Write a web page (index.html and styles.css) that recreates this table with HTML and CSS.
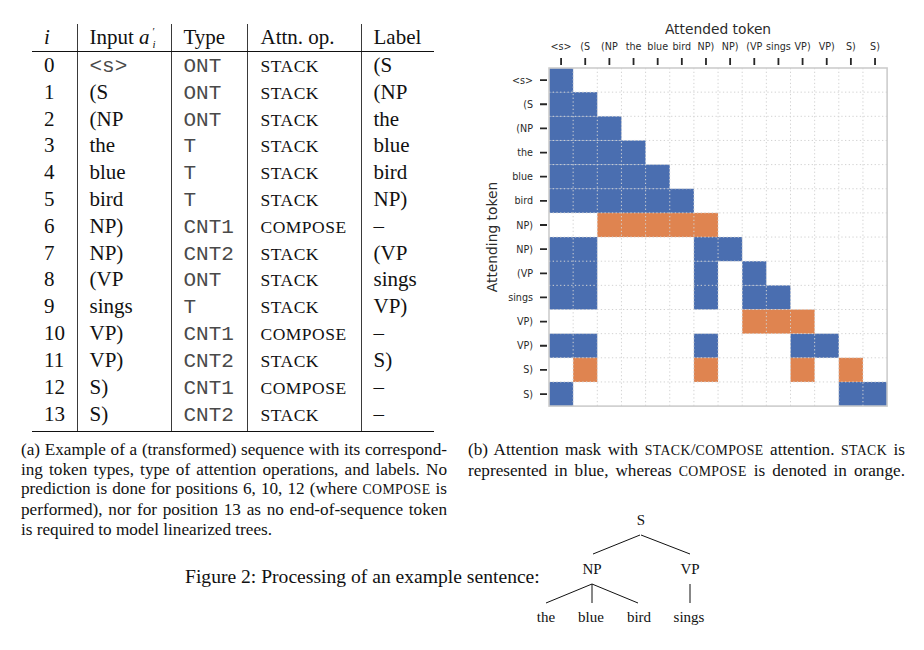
FILE: index.html
```html
<!DOCTYPE html>
<html lang="en">
<head>
<meta charset="utf-8">
<title>Figure 2</title>
<link rel="stylesheet" href="styles.css">
</head>
<body>
<div class="top">
  <div class="tbl-wrap">
    <table class="seq">
      <colgroup><col class="w-i"><col class="w-in"><col class="w-ty"><col class="w-op"><col class="w-lb"></colgroup>
      <thead>
        <tr><th><i>i</i></th><th>Input <span class="math"><i>a</i><span class="ps"><span class="pr">′</span><i class="sb">i</i></span></span></th><th>Type</th><th class="op">Attn. op.</th><th>Label</th></tr>
      </thead>
      <tbody>
        <tr><td>0</td><td><span class="mono">&lt;s&gt;</span></td><td><span class="mono">ONT</span></td><td class="op"><span class="sc">STACK</span></td><td>(S</td></tr>
        <tr><td>1</td><td>(S</td><td><span class="mono">ONT</span></td><td class="op"><span class="sc">STACK</span></td><td>(NP</td></tr>
        <tr><td>2</td><td>(NP</td><td><span class="mono">ONT</span></td><td class="op"><span class="sc">STACK</span></td><td>the</td></tr>
        <tr><td>3</td><td>the</td><td><span class="mono">T</span></td><td class="op"><span class="sc">STACK</span></td><td>blue</td></tr>
        <tr><td>4</td><td>blue</td><td><span class="mono">T</span></td><td class="op"><span class="sc">STACK</span></td><td>bird</td></tr>
        <tr><td>5</td><td>bird</td><td><span class="mono">T</span></td><td class="op"><span class="sc">STACK</span></td><td>NP)</td></tr>
        <tr><td>6</td><td>NP)</td><td><span class="mono">CNT1</span></td><td class="op"><span class="sc">COMPOSE</span></td><td>–</td></tr>
        <tr><td>7</td><td>NP)</td><td><span class="mono">CNT2</span></td><td class="op"><span class="sc">STACK</span></td><td>(VP</td></tr>
        <tr><td>8</td><td>(VP</td><td><span class="mono">ONT</span></td><td class="op"><span class="sc">STACK</span></td><td>sings</td></tr>
        <tr><td>9</td><td>sings</td><td><span class="mono">T</span></td><td class="op"><span class="sc">STACK</span></td><td>VP)</td></tr>
        <tr><td>10</td><td>VP)</td><td><span class="mono">CNT1</span></td><td class="op"><span class="sc">COMPOSE</span></td><td>–</td></tr>
        <tr><td>11</td><td>VP)</td><td><span class="mono">CNT2</span></td><td class="op"><span class="sc">STACK</span></td><td>S)</td></tr>
        <tr><td>12</td><td>S)</td><td><span class="mono">CNT1</span></td><td class="op"><span class="sc">COMPOSE</span></td><td>–</td></tr>
        <tr><td>13</td><td>S)</td><td><span class="mono">CNT2</span></td><td class="op"><span class="sc">STACK</span></td><td>–</td></tr>
      </tbody>
    </table>
  </div>

  <div class="plot-wrap">
    <svg class="plot" width="437" height="440" viewBox="0 0 437 440">
      <text class="ax-title" x="250" y="34" text-anchor="middle">Attended token</text>
      <text class="ax-title" transform="translate(29 237) rotate(-90)" text-anchor="middle">Attending token</text>
      <g class="tl" text-anchor="middle">
        <text x="93.08" y="50">&lt;s&gt;</text>
        <text x="117.23" y="50">(S</text>
        <text x="141.38" y="50">(NP</text>
        <text x="165.53" y="50">the</text>
        <text x="189.68" y="50">blue</text>
        <text x="213.83" y="50">bird</text>
        <text x="237.98" y="50">NP)</text>
        <text x="262.13" y="50">NP)</text>
        <text x="286.28" y="50">(VP</text>
        <text x="310.43" y="50">sings</text>
        <text x="334.58" y="50">VP)</text>
        <text x="358.73" y="50">VP)</text>
        <text x="382.88" y="50">S)</text>
        <text x="407.03" y="50">S)</text>
      </g>
      <g class="tl" text-anchor="end">
        <text x="65" y="83.6">&lt;s&gt;</text>
        <text x="65" y="107.7">(S</text>
        <text x="65" y="131.9">(NP</text>
        <text x="65" y="156">the</text>
        <text x="65" y="180.2">blue</text>
        <text x="65" y="204.3">bird</text>
        <text x="65" y="228.5">NP)</text>
        <text x="65" y="252.6">NP)</text>
        <text x="65" y="276.8">(VP</text>
        <text x="65" y="300.9">sings</text>
        <text x="65" y="325.1">VP)</text>
        <text x="65" y="349.2">VP)</text>
        <text x="65" y="373.4">S)</text>
        <text x="65" y="397.5">S)</text>
      </g>
      <path class="ticks" d="M93.08 58V65M117.23 58V65M141.38 58V65M165.53 58V65M189.68 58V65M213.83 58V65M237.98 58V65M262.13 58V65M286.28 58V65M310.43 58V65M334.58 58V65M358.73 58V65M382.88 58V65M407.03 58V65M72 80.08H79M72 104.23H79M72 128.38H79M72 152.53H79M72 176.68H79M72 200.83H79M72 224.98H79M72 249.13H79M72 273.28H79M72 297.43H79M72 321.58H79M72 345.73H79M72 369.88H79M72 394.03H79"/>
      <g transform="translate(81 68) scale(24.15)">
        <g class="blue">
          <rect x="0" y="0" width="1" height="1"/>
          <rect x="0" y="1" width="2" height="1"/>
          <rect x="0" y="2" width="3" height="1"/>
          <rect x="0" y="3" width="4" height="1"/>
          <rect x="0" y="4" width="5" height="1"/>
          <rect x="0" y="5" width="6" height="1"/>
          <rect x="0" y="7" width="2" height="3"/>
          <rect x="6" y="7" width="2" height="1"/>
          <rect x="6" y="8" width="1" height="2"/>
          <rect x="8" y="8" width="1" height="1"/>
          <rect x="8" y="9" width="2" height="1"/>
          <rect x="0" y="11" width="2" height="1"/>
          <rect x="6" y="11" width="1" height="1"/>
          <rect x="10" y="11" width="2" height="1"/>
          <rect x="0" y="13" width="1" height="1"/>
          <rect x="12" y="13" width="2" height="1"/>
        </g>
        <g class="orange">
          <rect x="2" y="6" width="5" height="1"/>
          <rect x="8" y="10" width="3" height="1"/>
          <rect x="1" y="12" width="1" height="1"/>
          <rect x="6" y="12" width="1" height="1"/>
          <rect x="10" y="12" width="1" height="1"/>
          <rect x="12" y="12" width="1" height="1"/>
        </g>
      </g>
      <path class="grid" d="M105.15 68V406.1M129.3 68V406.1M153.45 68V406.1M177.6 68V406.1M201.75 68V406.1M225.9 68V406.1M250.05 68V406.1M274.2 68V406.1M298.35 68V406.1M322.5 68V406.1M346.65 68V406.1M370.8 68V406.1M394.95 68V406.1M81 92.15H419.1M81 116.3H419.1M81 140.45H419.1M81 164.6H419.1M81 188.75H419.1M81 212.9H419.1M81 237.05H419.1M81 261.2H419.1M81 285.35H419.1M81 309.5H419.1M81 333.65H419.1M81 357.8H419.1M81 381.95H419.1"/>
      <rect class="frame" x="81" y="68" width="338.1" height="338.1"/>
    </svg>
  </div>

  <p class="cap cap-a">
    <span class="ln">(a) Example of a (transformed) sequence with its correspond-</span>
    <span class="ln">ing token types, type of attention operations, and labels. No</span>
    <span class="ln">prediction is done for positions 6, 10, 12 (where <span class="sc">COMPOSE</span> is</span>
    <span class="ln">performed), nor for position 13 as no end-of-sequence token</span>
    <span class="ln last">is required to model linearized trees.</span>
  </p>
  <p class="cap cap-b">
    <span class="ln">(b) Attention mask with <span class="sc">STACK</span>/<span class="sc">COMPOSE</span> attention. <span class="sc">STACK</span> is</span>
    <span class="ln">represented in blue, whereas <span class="sc">COMPOSE</span> is denoted in orange.</span>
  </p>
</div>

<div class="fig2">
  <p class="fig2-text">Figure 2: Processing of an example sentence:</p>
  <svg class="tree" width="200" height="130" viewBox="0 0 200 130">
    <g class="tree-lines">
      <path d="M110 34L63 53M111 34L160 53M62 83L16 102M62 83V102M62 83L108 102M160 83V102"/>
    </g>
    <g class="tree-text" text-anchor="middle">
      <text x="111" y="24">S</text>
      <text x="62" y="73">NP</text>
      <text x="160" y="73">VP</text>
      <text x="16" y="121">the</text>
      <text x="61" y="121">blue</text>
      <text x="109" y="121">bird</text>
      <text x="159" y="121">sings</text>
    </g>
  </svg>
</div>
</body>
</html>
```

FILE: styles.css
```css
html, body {
  margin: 0;
  padding: 0;
  background: #ffffff;
}

body {
  width: 924px;
  height: 650px;
  overflow: hidden;
  color: #111111;
  font-family: "Liberation Serif", "Times New Roman", serif;
}

.top {
  display: grid;
  grid-template-columns: 447px 437px;
  grid-template-rows: 440px auto;
  padding-left: 21px;
}

/* ---------- table ---------- */
.tbl-wrap {
  padding: 24px 0 0 11px;
}

.seq {
  border-collapse: collapse;
  table-layout: fixed;
  width: 402px;
  font-size: 21px;
}

.w-i { width: 45px; }
.w-in { width: 94px; }
.w-ty { width: 76px; }
.w-op { width: 114px; }
.w-lb { width: 73px; }

.seq th,
.seq td {
  padding: 0 0 0 12px;
  text-align: left;
  font-weight: normal;
  white-space: nowrap;
  vertical-align: middle;
}

.seq td {
  height: 26.8px;
  line-height: 26.8px;
}

.seq th {
  height: 27px;
  line-height: 27px;
  border-bottom: 1.5px solid #111111;
}

.seq td + td,
.seq th + th {
  border-left: 1.2px solid #3a3a3a;
}

.seq .op {
  padding-left: 13px;
}

.seq tbody tr:last-child td {
  border-bottom: 1.5px solid #111111;
  height: 28.8px;
  line-height: 26.8px;
  padding-bottom: 2px;
}

.mono {
  font-family: "Liberation Mono", "Courier New", monospace;
  color: #4a4a4a;
  line-height: 1;
}

.seq .sc {
  font-size: 17.5px;
  letter-spacing: 0.5px;
  line-height: 1;
}

.math {
  display: inline-flex;
  align-items: flex-start;
  line-height: 27px;
}

.ps {
  display: inline-flex;
  flex-direction: column;
  font-size: 11px;
  line-height: 13px;
  margin-left: 3px;
  margin-top: 1px;
}

.pr {
  font-style: normal;
  height: 13px;
}

.sb {
  height: 13px;
}

/* ---------- plot ---------- */
.plot {
  display: block;
  font-family: "DejaVu Sans", sans-serif;
}

.ax-title {
  font-size: 13.8px;
  fill: #2b2b2b;
}

.tl {
  font-size: 9.6px;
  fill: #2b2b2b;
}

.ticks {
  stroke: #262626;
  stroke-width: 1.8;
  fill: none;
}

.blue { fill: #4a6eb0; }
.orange { fill: #df8450; }

.grid {
  fill: none;
  stroke: #d2d2d2;
  stroke-width: 1;
  stroke-dasharray: 1.3 2.4;
}

.frame {
  fill: none;
  stroke: #cdcdcd;
  stroke-width: 1.6;
}

/* ---------- captions ---------- */
.cap {
  margin: 0;
  font-size: 17.2px;
  line-height: 19.7px;
}

.cap-a { width: 426px; }
.cap-b { width: 437px; }

.ln {
  display: block;
  text-align: justify;
  text-align-last: justify;
}

.ln.last {
  text-align-last: left;
}

.cap .sc {
  font-size: 13.8px;
  letter-spacing: 0.4px;
}

/* ---------- figure 2 line ---------- */
.fig2 {
  display: flex;
  align-items: flex-start;
  margin-top: -38.5px;
  padding-left: 185px;
}

.fig2-text {
  width: 345px;
  margin: 64px 0 0 0;
  font-size: 19.6px;
  line-height: 23px;
  white-space: nowrap;
}

.tree {
  display: block;
}

.tree-lines path {
  fill: none;
  stroke: #111111;
  stroke-width: 1;
}

.tree-text {
  font-family: "Liberation Serif", "Times New Roman", serif;
  font-size: 15px;
  fill: #111111;
}
```
